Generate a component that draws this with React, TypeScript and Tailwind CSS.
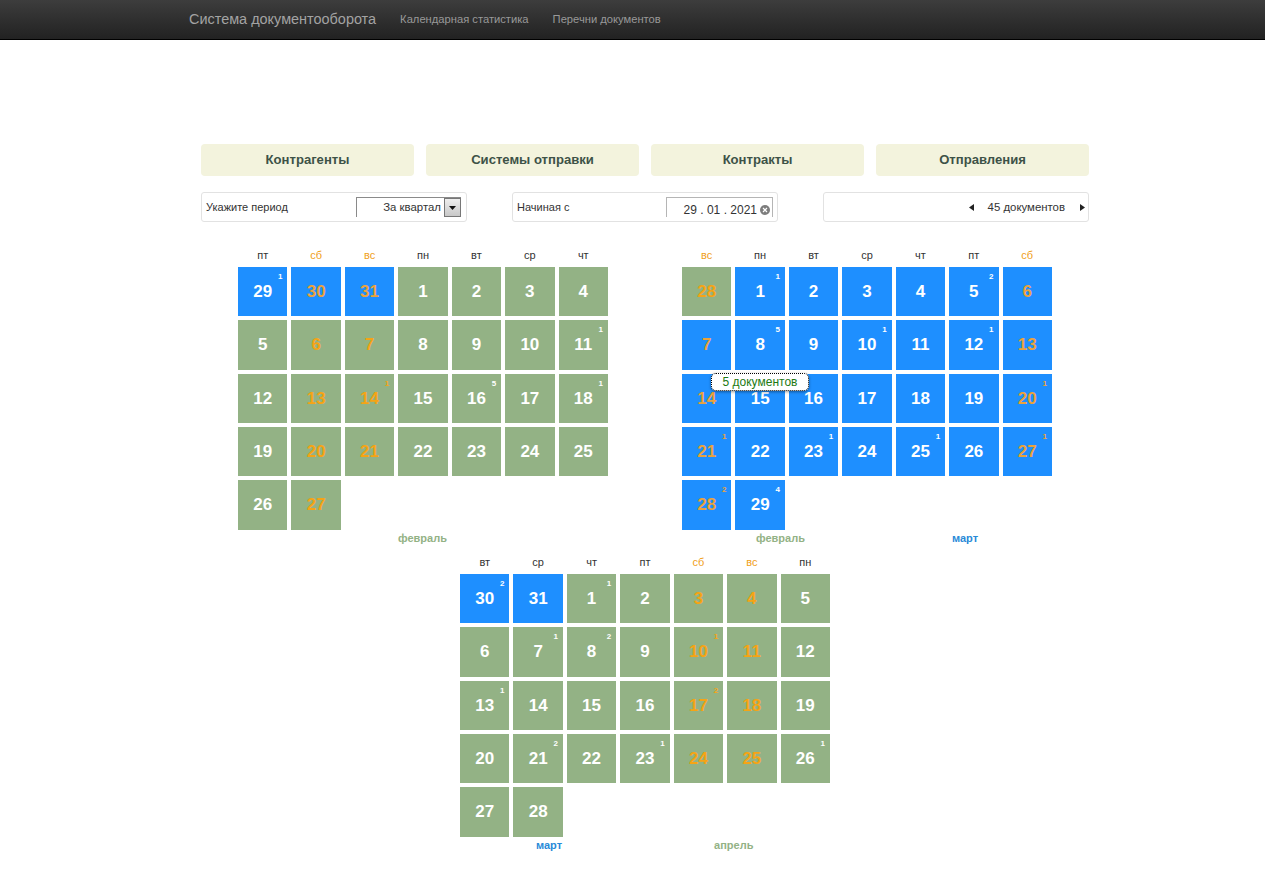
import React from "react";

type Month = "g" | "b";
type Cell = { d: number; m: Month; n?: number };

const WEEKEND_LABELS = ["сб", "вс"];

function build(days: number[], blueTest: (i: number) => boolean, notes: Record<number, number>): Cell[] {
  return days.map((d, i) => ({ d, m: blueTest(i) ? "b" : "g", n: notes[i] }));
}
function range(a: number, b: number) {
  const r: number[] = [];
  for (let i = a; i <= b; i++) r.push(i);
  return r;
}

const cal1 = {
  head: ["пт", "сб", "вс", "пн", "вт", "ср", "чт"],
  cells: build(
    [29, 30, 31, ...range(1, 27)],
    (i) => i < 3,
    { 0: 1, 13: 1, 16: 1, 18: 5, 20: 1 }
  ),
};
const cal2 = {
  head: ["вс", "пн", "вт", "ср", "чт", "пт", "сб"],
  cells: build(
    [28, ...range(1, 29)],
    (i) => i > 0,
    { 1: 1, 5: 2, 8: 5, 10: 1, 12: 1, 20: 1, 21: 1, 23: 1, 25: 1, 27: 1, 28: 2, 29: 4 }
  ),
};
const cal3 = {
  head: ["вт", "ср", "чт", "пт", "сб", "вс", "пн"],
  cells: build(
    [30, 31, ...range(1, 28)],
    (i) => i < 2,
    { 0: 2, 2: 1, 8: 1, 9: 2, 11: 1, 14: 1, 18: 2, 22: 2, 24: 1, 27: 1 }
  ),
};

function Calendar({
  head,
  cells,
  children,
  tooltip,
}: {
  head: string[];
  cells: Cell[];
  children: React.ReactNode;
  tooltip?: boolean;
}) {
  return (
    <div className="w-[444px] h-[307px] px-[37px] shrink-0">
      <div className="relative w-[370px]">
        <div className="grid grid-cols-7 gap-x-[4px] h-[18px] text-[11px] leading-[13px] text-center text-[#333]">
          {head.map((h, i) => (
            <div key={i} className={WEEKEND_LABELS.includes(h) ? "text-[#f0a020]" : ""}>
              {h}
            </div>
          ))}
        </div>
        <div className="grid grid-cols-7 gap-x-[4px] gap-y-[4px] auto-rows-[49.35px]">
          {cells.map((c, i) => {
            const weekend = WEEKEND_LABELS.includes(head[i % 7]);
            return (
              <div
                key={i}
                className={
                  "relative flex items-center justify-center text-[17px] font-bold " +
                  (c.m === "b" ? "bg-[#1e8fff] " : "bg-[#93b285] ") +
                  (weekend ? (c.m === "b" ? "text-[#eaa23c]" : "text-[#f5a415]") : "text-white")
                }
              >
                {c.d}
                {c.n ? (
                  <span className="absolute right-[5px] top-[5px] text-[8px] leading-[10px]">{c.n}</span>
                ) : null}
              </div>
            );
          })}
        </div>
        {tooltip ? (
          <div className="absolute left-[29px] top-[124px] w-[98px] h-[18px] flex items-center justify-center bg-white border border-dotted border-black rounded-[5px] shadow-[0_1px_3px_rgba(0,0,0,0.4)] text-[12px] leading-[16px] text-[#1d7a12] z-10">
            5 документов
          </div>
        ) : null}
        {children}
      </div>
    </div>
  );
}

function Tab({ label }: { label: string }) {
  return (
    <div className="h-[32px] flex items-center justify-center bg-[#f3f3dd] rounded-[4px] text-[13.1px] font-bold text-[#3d5247]">
      {label}
    </div>
  );
}

export default function App() {
  return (
    <div className="min-h-[873px] bg-white font-['Liberation_Sans',Arial,sans-serif] text-[#333]">
      <nav className="h-[40px] bg-gradient-to-b from-[#3d3d3d] to-[#222222] border-b border-black flex items-center pl-[189px]">
        <span className="text-[14.45px] text-[#a3a3a3]">Система документооборота</span>
        <span className="ml-[24px] text-[11.2px] text-[#999]">Календарная статистика</span>
        <span className="ml-[24px] text-[11.2px] text-[#999]">Перечни документов</span>
      </nav>

      <main className="w-[888px] ml-[201px] pt-[104px]">
        <div className="grid grid-cols-4 gap-x-[12px]">
          <Tab label="Контрагенты" />
          <Tab label="Системы отправки" />
          <Tab label="Контракты" />
          <Tab label="Отправления" />
        </div>

        <div className="mt-[16px] flex justify-between">
          <div className="w-[266px] h-[30px] flex items-center border border-[#e2e2e2] rounded-[3px] pl-[4px] pr-[5px] text-[11px]">
            <span className="mt-[1px]">Укажите период</span>
            <div className="ml-auto w-[105px] h-[20px] flex border-t border-l border-[#8a8a8a]">
              <span className="flex-1 text-right pr-[3px] leading-[19px] text-[11.4px]">За квартал</span>
              <span className="w-[17px] h-[19px] flex items-center justify-center border border-[#777] bg-gradient-to-b from-[#eeeeee] to-[#c8c8c8]">
                <svg width="7" height="4" viewBox="0 0 7 4"><path d="M0 0h7L3.500 4z" fill="#111" /></svg>
              </span>
            </div>
          </div>

          <div className="w-[266px] h-[30px] flex items-center border border-[#e2e2e2] rounded-[3px] pl-[4px] pr-[4px] text-[11px]">
            <span>Начиная с</span>
            <div className="ml-auto w-[107px] h-[20px] flex items-center justify-end border-t border-l border-r border-[#b5b5b5] pr-[2px]">
              <span className="text-[12px] mt-[4px]">29 . 01 . 2021</span>
              <svg className="ml-[3px] mt-[4px]" width="10" height="10" viewBox="0 0 10 10">
                <circle cx="5" cy="5" r="5" fill="#7d7d7d" />
                <path d="M3 3l4 4M7 3l-4 4" stroke="#fff" strokeWidth="1.200" />
              </svg>
            </div>
          </div>

          <div className="w-[266px] h-[30px] flex items-center justify-end border border-[#e2e2e2] rounded-[3px] pr-[3px] text-[11.4px]">
            <svg width="5" height="7" viewBox="0 0 5 7"><path d="M5 0v7L0 3.500z" fill="#222" /></svg>
            <span className="ml-[14px] mr-[15px] mt-[1px]">45 документов</span>
            <svg width="5" height="7" viewBox="0 0 5 7"><path d="M0 0v7l5-3.500z" fill="#222" /></svg>
          </div>
        </div>

        <div className="mt-[27px] flex flex-wrap justify-center">
          <Calendar head={cal1.head} cells={cal1.cells}>
            <div className="flex pl-[160px] mt-[2px] h-[13px] text-[11px] leading-[13px] font-bold">
              <span className="text-[#93b285]">февраль</span>
            </div>
          </Calendar>
          <Calendar head={cal2.head} cells={cal2.cells} tooltip>
            <div className="flex pl-[74px] mt-[2px] h-[13px] text-[11px] leading-[13px] font-bold">
              <span className="text-[#93b285]">февраль</span>
              <span className="ml-[147px] text-[#2a8ad8]">март</span>
            </div>
          </Calendar>
          <Calendar head={cal3.head} cells={cal3.cells}>
            <div className="flex pl-[76px] mt-[2px] h-[13px] text-[11px] leading-[13px] font-bold">
              <span className="text-[#2a8ad8]">март</span>
              <span className="ml-[152px] text-[#93b285]">апрель</span>
            </div>
          </Calendar>
        </div>
      </main>
    </div>
  );
}
